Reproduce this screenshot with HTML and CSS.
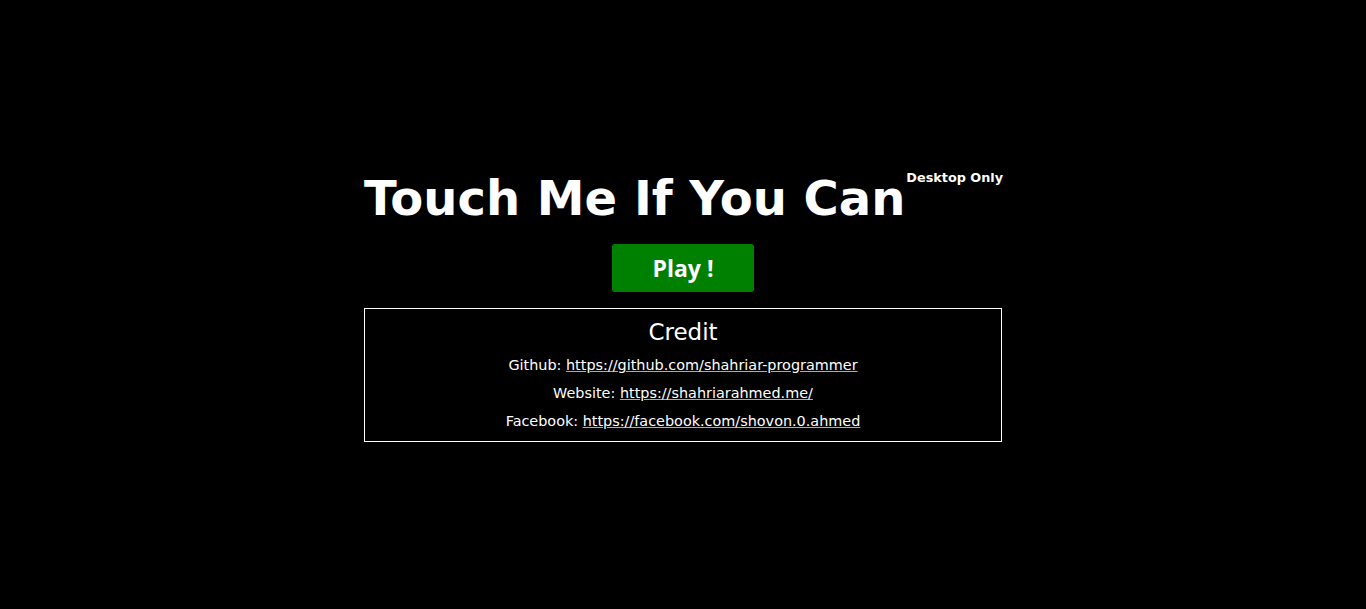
FILE: index.html
```html
<!DOCTYPE html>
<html>
<head>
<meta charset="utf-8">
<link rel="stylesheet" href="styles.css">
</head>
<body>
<main class="wrap">
  <div class="head">
    <h1 class="title">Touch Me If You Can</h1>
    <span class="tag">Desktop Only</span>
  </div>
  <button class="play">Play !</button>
  <section class="credit">
    <h2 class="credit-title">Credit</h2>
    <p class="line">Github: <a href="#">https://github.com/shahriar-programmer</a></p>
    <p class="line">Website: <a href="#">https://shahriarahmed.me/</a></p>
    <p class="line">Facebook: <a href="#">https://facebook.com/shovon.0.ahmed</a></p>
  </section>
</main>
</body>
</html>
```
FILE: styles.css
```css
html, body {
  margin: 0;
  padding: 0;
  background: #000;
  color: #fff;
  font-family: "DejaVu Sans", sans-serif;
}
.wrap {
  width: 638px;
  margin: 0 auto;
  padding-top: 170px;
  display: flex;
  flex-direction: column;
  align-items: center;
}
.head {
  width: 100%;
  display: flex;
  align-items: flex-start;
  white-space: nowrap;
}
.title {
  margin: 0;
  font-size: 48px;
  font-weight: bold;
  line-height: 56px;
  flex-shrink: 0;
}
.tag {
  font-size: 12.8px;
  font-weight: bold;
  margin-top: 0;
  margin-left: 1px;
  flex-shrink: 0;
}
.play {
  margin-top: 18px;
  width: 142px;
  height: 48px;
  background: #008000;
  color: #fff;
  border: none;
  border-radius: 3px;
  font-family: "Open Sans", sans-serif;
  font-weight: bold;
  font-size: 23px;
}
.credit {
  margin-top: 16px;
  width: 100%;
  box-sizing: border-box;
  border: 1px solid #fff;
  text-align: center;
  padding: 8px 0 6px;
}
.credit-title {
  margin: 0 0 4px;
  font-size: 23px;
  font-weight: normal;
  line-height: 30px;
}
.line {
  margin: 0;
  font-size: 14.4px;
  line-height: 28px;
}
.line a {
  color: #fff;
  text-decoration-color: #aaa;
}
```
